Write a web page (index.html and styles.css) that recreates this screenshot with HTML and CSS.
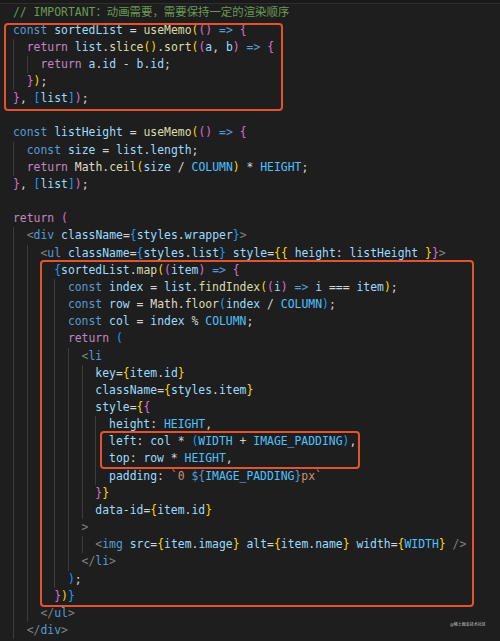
FILE: index.html
```html
<!DOCTYPE html>
<html lang="zh">
<head>
<meta charset="utf-8">
<title>code</title>
<link rel="stylesheet" href="styles.css">
</head>
<body>
<div class="editor">
<div class="topline"></div>
<div class="code">
<div class="ln"><span class="m">// IMPORTANT：动画需要，需要保持一定的渲染顺序</span></div>
<div class="ln"><span class="k">const</span> <span class="v">sortedList</span> = <span class="f">useMemo</span><span class="y">(</span><span class="o">()</span> <span class="k">=&gt;</span> <span class="o">{</span></div>
<div class="ln"><i class="g"></i><span class="r">return</span> <span class="v">list</span>.<span class="f">slice</span><span class="y">()</span>.<span class="f">sort</span><span class="y">(</span><span class="o">(</span><span class="v">a</span>, <span class="v">b</span><span class="o">)</span> <span class="k">=&gt;</span> <span class="o">{</span></div>
<div class="ln"><i class="g"></i><i class="g"></i><span class="r">return</span> <span class="v">a</span>.<span class="v">id</span> - <span class="v">b</span>.<span class="v">id</span>;</div>
<div class="ln"><i class="g"></i><span class="o">}</span><span class="y">)</span>;</div>
<div class="ln"><span class="o">}</span>, <span class="u">[</span><span class="v">list</span><span class="u">]</span><span class="o">)</span>;</div>
<div class="ln"> </div>
<div class="ln"><span class="k">const</span> <span class="v">listHeight</span> = <span class="f">useMemo</span><span class="y">(</span><span class="o">()</span> <span class="k">=&gt;</span> <span class="o">{</span></div>
<div class="ln"><i class="g"></i><span class="k">const</span> <span class="v">size</span> = <span class="v">list</span>.<span class="v">length</span>;</div>
<div class="ln"><i class="g"></i><span class="r">return</span> <span class="h">Math</span>.<span class="f">ceil</span><span class="y">(</span><span class="v">size</span> / <span class="n">COLUMN</span><span class="y">)</span> * <span class="n">HEIGHT</span>;</div>
<div class="ln"><span class="o">}</span>, <span class="u">[</span><span class="v">list</span><span class="u">]</span><span class="o">)</span>;</div>
<div class="ln"> </div>
<div class="ln"><span class="r">return</span> <span class="o">(</span></div>
<div class="ln"><i class="g"></i><span class="t">&lt;</span><span class="k">div</span> <span class="v">className</span>=<span class="u">{</span><span class="v">styles</span>.<span class="v">wrapper</span><span class="u">}</span><span class="t">&gt;</span></div>
<div class="ln"><i class="g"></i><i class="g"></i><span class="t">&lt;</span><span class="k">ul</span> <span class="v">className</span>=<span class="u">{</span><span class="v">styles</span>.<span class="v">list</span><span class="u">}</span> <span class="v">style</span>=<span class="y">{</span><span class="y">{</span> <span class="v">height</span>: <span class="v">listHeight</span> <span class="y">}</span><span class="o">}</span><span class="t">&gt;</span></div>
<div class="ln"><i class="g"></i><i class="g"></i><i class="g"></i><span class="u">{</span><span class="v">sortedList</span>.<span class="f">map</span><span class="y">(</span><span class="o">(</span><span class="v">item</span><span class="o">)</span> <span class="k">=&gt;</span> <span class="o">{</span></div>
<div class="ln"><i class="g"></i><i class="g"></i><i class="g"></i><i class="g"></i><span class="k">const</span> <span class="v">index</span> = <span class="v">list</span>.<span class="f">findIndex</span><span class="y">(</span><span class="o">(</span><span class="v">i</span><span class="o">)</span> <span class="k">=&gt;</span> <span class="v">i</span> === <span class="v">item</span><span class="y">)</span>;</div>
<div class="ln"><i class="g"></i><i class="g"></i><i class="g"></i><i class="g"></i><span class="k">const</span> <span class="v">row</span> = <span class="h">Math</span>.<span class="f">floor</span><span class="u">(</span><span class="v">index</span> / <span class="n">COLUMN</span><span class="u">)</span>;</div>
<div class="ln"><i class="g"></i><i class="g"></i><i class="g"></i><i class="g"></i><span class="k">const</span> <span class="v">col</span> = <span class="v">index</span> % <span class="n">COLUMN</span>;</div>
<div class="ln"><i class="g"></i><i class="g"></i><i class="g"></i><i class="g"></i><span class="r">return</span> <span class="u">(</span></div>
<div class="ln"><i class="g"></i><i class="g"></i><i class="g"></i><i class="g"></i><i class="g"></i><span class="t">&lt;</span><span class="k">li</span></div>
<div class="ln"><i class="g"></i><i class="g"></i><i class="g"></i><i class="g"></i><i class="g"></i><i class="g"></i><span class="v">key</span>=<span class="y">{</span><span class="v">item</span>.<span class="v">id</span><span class="y">}</span></div>
<div class="ln"><i class="g"></i><i class="g"></i><i class="g"></i><i class="g"></i><i class="g"></i><i class="g"></i><span class="v">className</span>=<span class="y">{</span><span class="v">styles</span>.<span class="v">item</span><span class="y">}</span></div>
<div class="ln"><i class="g"></i><i class="g"></i><i class="g"></i><i class="g"></i><i class="g"></i><i class="g"></i><span class="v">style</span>=<span class="y">{</span><span class="o">{</span></div>
<div class="ln"><i class="g"></i><i class="g"></i><i class="g"></i><i class="g"></i><i class="g"></i><i class="g"></i><i class="g"></i><span class="v">height</span>: <span class="n">HEIGHT</span>,</div>
<div class="ln"><i class="g"></i><i class="g"></i><i class="g"></i><i class="g"></i><i class="g"></i><i class="g"></i><i class="g"></i><span class="v">left</span>: <span class="v">col</span> * <span class="u">(</span><span class="n">WIDTH</span> + <span class="n">IMAGE_PADDING</span><span class="u">)</span>,</div>
<div class="ln"><i class="g"></i><i class="g"></i><i class="g"></i><i class="g"></i><i class="g"></i><i class="g"></i><i class="g"></i><span class="v">top</span>: <span class="v">row</span> * <span class="n">HEIGHT</span>,</div>
<div class="ln"><i class="g"></i><i class="g"></i><i class="g"></i><i class="g"></i><i class="g"></i><i class="g"></i><i class="g"></i><span class="v">padding</span>: <span class="s">`0 </span><span class="k">${</span><span class="n">IMAGE_PADDING</span><span class="k">}</span><span class="s">px`</span></div>
<div class="ln"><i class="g"></i><i class="g"></i><i class="g"></i><i class="g"></i><i class="g"></i><i class="g"></i><span class="o">}</span><span class="y">}</span></div>
<div class="ln"><i class="g"></i><i class="g"></i><i class="g"></i><i class="g"></i><i class="g"></i><i class="g"></i><span class="v">data-id</span>=<span class="y">{</span><span class="v">item</span>.<span class="v">id</span><span class="y">}</span></div>
<div class="ln"><i class="g"></i><i class="g"></i><i class="g"></i><i class="g"></i><i class="g"></i><span class="t">&gt;</span></div>
<div class="ln"><i class="g"></i><i class="g"></i><i class="g"></i><i class="g"></i><i class="g"></i><i class="g"></i><span class="t">&lt;</span><span class="k">img</span> <span class="v">src</span>=<span class="y">{</span><span class="v">item</span>.<span class="v">image</span><span class="y">}</span> <span class="v">alt</span>=<span class="y">{</span><span class="v">item</span>.<span class="v">name</span><span class="y">}</span> <span class="v">width</span>=<span class="y">{</span><span class="n">WIDTH</span><span class="y">}</span> <span class="t">/&gt;</span></div>
<div class="ln"><i class="g"></i><i class="g"></i><i class="g"></i><i class="g"></i><i class="g"></i><span class="t">&lt;/</span><span class="k">li</span><span class="t">&gt;</span></div>
<div class="ln"><i class="g"></i><i class="g"></i><i class="g"></i><i class="g"></i><span class="u">)</span>;</div>
<div class="ln"><i class="g"></i><i class="g"></i><i class="g"></i><span class="o">}</span><span class="y">)</span><span class="u">}</span></div>
<div class="ln"><i class="g"></i><i class="g"></i><span class="t">&lt;/</span><span class="k">ul</span><span class="t">&gt;</span></div>
<div class="ln"><i class="g"></i><span class="t">&lt;/</span><span class="k">div</span><span class="t">&gt;</span></div>
</div>
<div class="box box1"></div>
<div class="box box2"></div>
<div class="box box3"></div>
<div class="mark">@稀土掘金技术社区</div>
</div>
</body>
</html>
```

FILE: styles.css
```css
html, body {
  margin: 0;
  padding: 0;
  background: #1e1e1e;
}
.editor {
  position: relative;
  width: 500px;
  height: 641px;
  overflow: hidden;
  background: #1e1e1e;
}
.topline {
  height: 3px;
  background: #191919;
  border-bottom: 1px solid #2f2f2f;
}
.code {
  padding: 0.4px 0 0 13px;
  font-family: "DejaVu Sans Mono", "Noto Sans CJK SC", monospace;
  font-size: 11.41px;
  line-height: 17.17px;
  color: #d4d4d4;
}
.ln {
  height: 17.17px;
  white-space: pre;
}
.g {
  display: inline-block;
  width: 2ch;
  height: 17.17px;
  vertical-align: top;
  box-sizing: border-box;
  border-left: 1px solid #3c3c3c;
}
.m { color: #6a9955; }
.k { color: #569cd6; }
.r { color: #c586c0; }
.v { color: #9cdcfe; }
.f { color: #dcdcaa; }
.n { color: #4fc1ff; }
.t { color: #808080; }
.s { color: #ce9178; }
.h { color: #e0dcc8; }
.y { color: #ffd700; }
.o { color: #da70d6; }
.u { color: #179fff; }
.box {
  position: absolute;
  box-sizing: border-box;
  border: 2.6px solid #e4522e;
  border-radius: 4px;
}
.box1 { left: 3.5px; top: 23.3px; width: 279px; height: 87.5px; }
.box2 { left: 40px; top: 259.5px; width: 434px; height: 347.5px; }
.box3 { left: 100px; top: 430.5px; width: 260px; height: 38px; }
.mark {
  position: absolute;
  left: 450px;
  top: 622px;
  font-family: "Noto Sans CJK SC", sans-serif;
  font-size: 8px;
  line-height: 8px;
  color: #c4c4c4;
  white-space: nowrap;
  transform: scale(0.5);
  transform-origin: left top;
}
```
